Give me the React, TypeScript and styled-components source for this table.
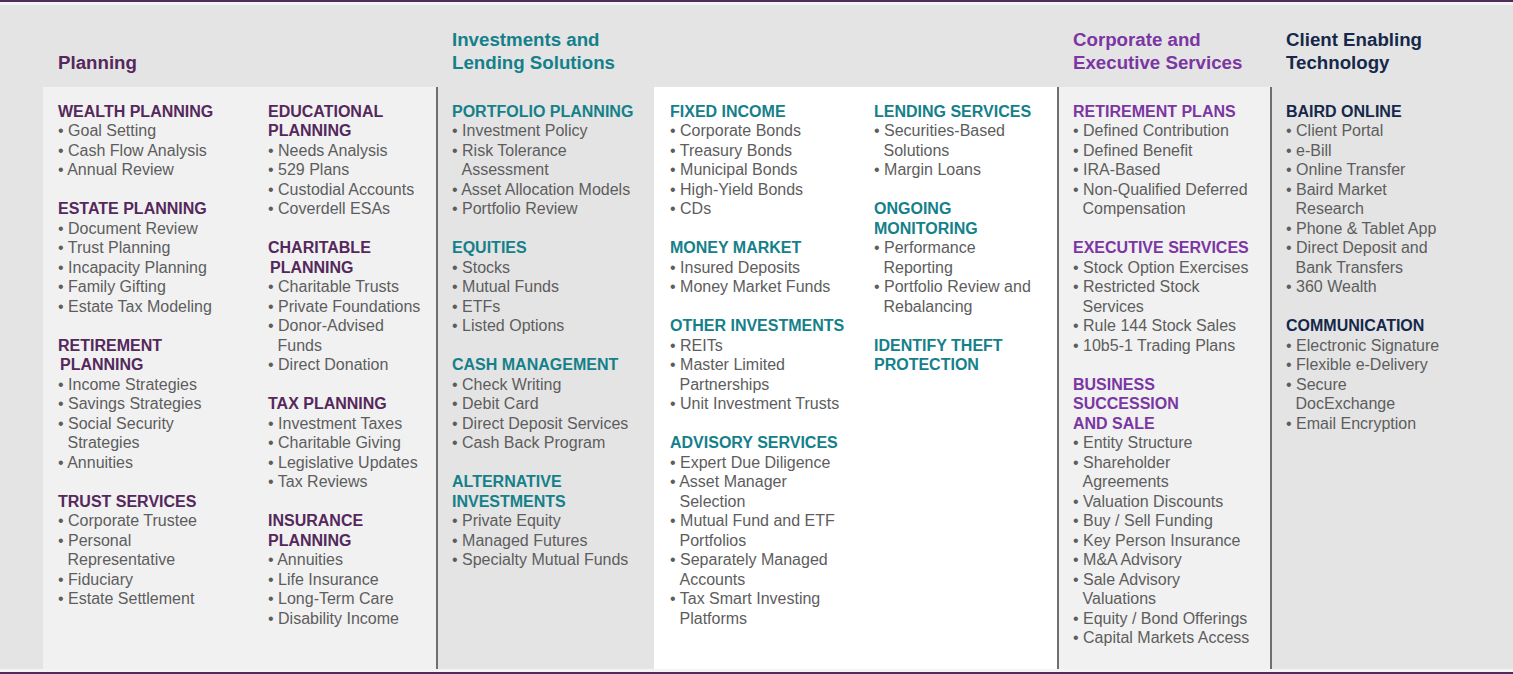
import styled, { createGlobalStyle } from "styled-components";

type Tone = "plum" | "teal" | "violet" | "navy";

type Section = {
  title: string[];
  items: string[][];
};

const colors: Record<Tone, string> = {
  plum: "#55285c",
  teal: "#14808a",
  violet: "#7b36a3",
  navy: "#15284a",
};

const s = (title: string, items: string[]): Section => ({
  title: title.split("|"),
  items: items.map((i) => i.split("|")),
});

const planningLeft: Section[] = [
  s("WEALTH PLANNING", ["Goal Setting", "Cash Flow Analysis", "Annual Review"]),
  s("ESTATE PLANNING", [
    "Document Review",
    "Trust Planning",
    "Incapacity Planning",
    "Family Gifting",
    "Estate Tax Modeling",
  ]),
  s("RETIREMENT| PLANNING", [
    "Income Strategies",
    "Savings Strategies",
    "Social Security|Strategies",
    "Annuities",
  ]),
  s("TRUST SERVICES", [
    "Corporate Trustee",
    "Personal|Representative",
    "Fiduciary",
    "Estate Settlement",
  ]),
];

const planningRight: Section[] = [
  s("EDUCATIONAL|PLANNING", [
    "Needs Analysis",
    "529 Plans",
    "Custodial Accounts",
    "Coverdell ESAs",
  ]),
  s("CHARITABLE| PLANNING", [
    "Charitable Trusts",
    "Private Foundations",
    "Donor-Advised|Funds",
    "Direct Donation",
  ]),
  s("TAX PLANNING", [
    "Investment Taxes",
    "Charitable Giving",
    "Legislative Updates",
    "Tax Reviews",
  ]),
  s("INSURANCE|PLANNING", [
    "Annuities",
    "Life Insurance",
    "Long-Term Care",
    "Disability Income",
  ]),
];

const portfolio: Section[] = [
  s("PORTFOLIO PLANNING", [
    "Investment Policy",
    "Risk Tolerance|Assessment",
    "Asset Allocation Models",
    "Portfolio Review",
  ]),
  s("EQUITIES", ["Stocks", "Mutual Funds", "ETFs", "Listed Options"]),
  s("CASH MANAGEMENT", [
    "Check Writing",
    "Debit Card",
    "Direct Deposit Services",
    "Cash Back Program",
  ]),
  s("ALTERNATIVE|INVESTMENTS", [
    "Private Equity",
    "Managed Futures",
    "Specialty Mutual Funds",
  ]),
];

const fixedIncome: Section[] = [
  s("FIXED INCOME", [
    "Corporate Bonds",
    "Treasury Bonds",
    "Municipal Bonds",
    "High-Yield Bonds",
    "CDs",
  ]),
  s("MONEY MARKET", ["Insured Deposits", "Money Market Funds"]),
  s("OTHER INVESTMENTS", [
    "REITs",
    "Master Limited|Partnerships",
    "Unit Investment Trusts",
  ]),
  s("ADVISORY SERVICES", [
    "Expert Due Diligence",
    "Asset Manager|Selection",
    "Mutual Fund and ETF|Portfolios",
    "Separately Managed|Accounts",
    "Tax Smart Investing|Platforms",
  ]),
];

const lending: Section[] = [
  s("LENDING SERVICES", ["Securities-Based|Solutions", "Margin Loans"]),
  s("ONGOING|MONITORING", [
    "Performance|Reporting",
    "Portfolio Review and|Rebalancing",
  ]),
  s("IDENTIFY THEFT|PROTECTION", []),
];

const corporate: Section[] = [
  s("RETIREMENT PLANS", [
    "Defined Contribution",
    "Defined Benefit",
    "IRA-Based",
    "Non-Qualified Deferred|Compensation",
  ]),
  s("EXECUTIVE SERVICES", [
    "Stock Option Exercises",
    "Restricted Stock|Services",
    "Rule 144 Stock Sales",
    "10b5-1 Trading Plans",
  ]),
  s("BUSINESS|SUCCESSION|AND SALE", [
    "Entity Structure",
    "Shareholder|Agreements",
    "Valuation Discounts",
    "Buy / Sell Funding",
    "Key Person Insurance",
    "M&A Advisory",
    "Sale Advisory|Valuations",
    "Equity / Bond Offerings",
    "Capital Markets Access",
  ]),
];

const client: Section[] = [
  s("BAIRD ONLINE", [
    "Client Portal",
    "e-Bill",
    "Online Transfer",
    "Baird Market|Research",
    "Phone & Tablet App",
    "Direct Deposit and|Bank Transfers",
    "360 Wealth",
  ]),
  s("COMMUNICATION", [
    "Electronic Signature",
    "Flexible e-Delivery",
    "Secure|DocExchange",
    "Email Encryption",
  ]),
];

function Lines({ parts }: { parts: string[] }) {
  return (
    <>
      {parts.map((p, i) => (
        <span key={i}>
          {i > 0 && <br />}
          {p.startsWith(" ") ? <Nudge>{p.trim()}</Nudge> : p}
        </span>
      ))}
    </>
  );
}

function Column({ sections, tone, width }: { sections: Section[]; tone: Tone; width?: number }) {
  return (
    <Col $width={width}>
      {sections.map((sec, i) => (
        <Block key={i}>
          <Heading $tone={tone}>
            <Lines parts={sec.title} />
          </Heading>
          {sec.items.map((item, j) => (
            <Item key={j}>
              • <Lines parts={item} />
            </Item>
          ))}
        </Block>
      ))}
    </Col>
  );
}

export default function App() {
  return (
    <>
      <GlobalStyle />
      <Frame>
        <Board>
          <Gutter />
          <Group>
            <Header $tone="plum" $pad={15}>Planning</Header>
            <Body>
              <Panel $bg="#f1f1f1" $right $pad={15}>
                <Column sections={planningLeft} tone="plum" width={210} />
                <Column sections={planningRight} tone="plum" />
              </Panel>
            </Body>
          </Group>
          <Group>
            <Header $tone="teal" $pad={14}>
              Investments and
              <br />
              Lending Solutions
            </Header>
            <Body>
              <Panel $bg="#e4e4e4" $pad={14} $width={216}>
                <Column sections={portfolio} tone="teal" />
              </Panel>
              <Panel $bg="#ffffff" $pad={16}>
                <Column sections={fixedIncome} tone="teal" width={204} />
                <Column sections={lending} tone="teal" />
              </Panel>
            </Body>
          </Group>
          <Group>
            <Header $tone="violet" $pad={16}>
              Corporate and
              <br />
              Executive Services
            </Header>
            <Body>
              <Panel $bg="#f1f1f1" $left $right $pad={14}>
                <Column sections={corporate} tone="violet" />
              </Panel>
            </Body>
          </Group>
          <Group>
            <Header $tone="navy" $pad={14}>
              Client Enabling
              <br />
              Technology
            </Header>
            <Body>
              <Panel $bg="#e4e4e4" $pad={14}>
                <Column sections={client} tone="navy" />
              </Panel>
            </Body>
          </Group>
        </Board>
      </Frame>
    </>
  );
}

const GlobalStyle = createGlobalStyle`
  html, body {
    margin: 0;
    padding: 0;
    background: #ffffff;
    overflow: hidden;
  }
  body {
    font-family: "Liberation Sans", Arial, sans-serif;
  }
`;

const Frame = styled.div`
  width: 1513px;
  height: 674px;
  box-sizing: border-box;
  border-top: 2px solid #4f2b5b;
  border-bottom: 2px solid #4f2b5b;
  padding: 3px 0;
  background: #f4f4f4;
`;

const Board = styled.div`
  display: grid;
  grid-template-columns: 43px 395px 619px 215px 241px;
  height: 664px;
  background: #e4e4e4;
`;

const Gutter = styled.div`
  background: #e4e4e4;
`;

const Group = styled.div`
  display: flex;
  flex-direction: column;
  min-width: 0;
`;

const Header = styled.div<{ $tone: Tone; $pad: number }>`
  height: 82px;
  box-sizing: border-box;
  display: flex;
  flex-direction: column;
  justify-content: flex-end;
  padding: 0 0 13px ${(p) => p.$pad}px;
  font-size: 18.7px;
  line-height: 23px;
  font-weight: bold;
  color: ${(p) => colors[p.$tone]};
  background: #e4e4e4;
`;

const Body = styled.div`
  flex: 1;
  display: flex;
`;

const Panel = styled.div<{
  $bg: string;
  $pad: number;
  $left?: boolean;
  $right?: boolean;
  $width?: number;
}>`
  display: flex;
  box-sizing: border-box;
  ${(p) => (p.$width ? `width: ${p.$width}px; flex: none;` : "flex: 1;")}
  background: ${(p) => p.$bg};
  padding: 14.6px 0 0 ${(p) => p.$pad}px;
  border-left: ${(p) => (p.$left ? "2px solid #6f6f6f" : "none")};
  border-right: ${(p) => (p.$right ? "2px solid #6f6f6f" : "none")};
`;

const Col = styled.div<{ $width?: number }>`
  ${(p) => (p.$width ? `width: ${p.$width}px; flex: none;` : "flex: 1;")}
  display: flex;
  flex-direction: column;
  gap: 19.5px;
`;

const Block = styled.div`
  display: flex;
  flex-direction: column;
`;

const Heading = styled.div<{ $tone: Tone }>`
  font-size: 16px;
  line-height: 19.5px;
  font-weight: bold;
  white-space: nowrap;
  color: ${(p) => colors[p.$tone]};
`;

const Nudge = styled.span`
  margin-left: 2px;
`;

const Item = styled.div`
  font-size: 16px;
  line-height: 19.5px;
  color: #5d5d5d;
  white-space: nowrap;
  padding-left: 9.5px;
  text-indent: -9.5px;
`;
